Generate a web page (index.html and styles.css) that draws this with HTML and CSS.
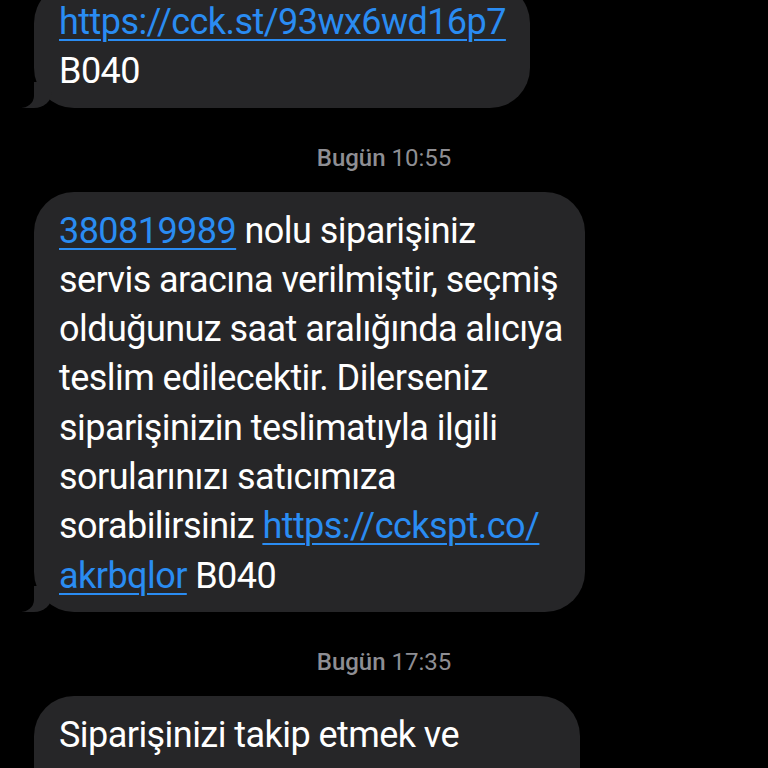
FILE: index.html
```html
<!DOCTYPE html>
<html>
	<head>
		<meta http-equiv="Content-Type" content="text/html; charset=utf-8">
		<title>Mesajlar</title>
		<link rel="stylesheet" href="styles.css">
	</head>
	<body>
		<div class="thread">

			<div class="bubble bubble-first">
				<a href="#">https://cck.st/93wx6wd16p7</a><br/>
				B040
			</div>

			<div class="stamp"><b>Bugün</b> 10:55</div>

			<div class="bubble bubble-second">
				<a href="#">380819989</a> nolu siparişiniz<br/>
				servis aracına verilmiştir, seçmiş<br/>
				olduğunuz saat aralığında alıcıya<br/>
				teslim edilecektir. Dilerseniz<br/>
				siparişinizin teslimatıyla ilgili<br/>
				sorularınızı satıcımıza<br/>
				sorabilirsiniz <a href="#">https://cckspt.co/<br/>akrbqlor</a> B040
			</div>

			<div class="stamp"><b>Bugün</b> 17:35</div>

			<div class="bubble bubble-third">
				Siparişinizi takip etmek ve
			</div>

		</div>
	</body>
</html>
```

FILE: styles.css
```css
body{
	margin: 0;
	padding: 0;
	overflow: hidden;
	height: 768px;
	background: #000;
	font-family: Roboto, "Noto Sans", sans-serif;
	color: #fff;
}

.thread{
	display: flex;
	flex-direction: column;
	margin-top: -17px;
	padding-left: 34px;
}

.bubble{
	position: relative;
	box-sizing: border-box;
	background: #262628;
	border-radius: 40px;
	padding: 15px 20px 11px 25px;
	font-size: 36px;
	line-height: 49.3px;
	letter-spacing: -0.55px;
	white-space: nowrap;
}

/* tail on the bottom left */
.bubble:before{
	content: "";
	position: absolute;
	left: -12px;
	bottom: 0;
	width: 30px;
	height: 26px;
	background: #262628;
	border-bottom-right-radius: 18px 16px;
}

.bubble:after{
	content: "";
	position: absolute;
	left: -30px;
	bottom: 0;
	width: 30px;
	height: 28px;
	background: #000;
	border-bottom-right-radius: 14px 12px;
}

.bubble-first{
	width: 496px;
}

.bubble-second{
	width: 551px;
}

.bubble-third{
	width: 546px;
	min-height: 140px;
}

.bubble a{
	color: #2a8cf2;
	text-decoration: underline;
	text-decoration-thickness: 2px;
	text-underline-offset: 5px;
}

.stamp{
	margin: 40px 0 24px -34px;
	text-align: center;
	font-size: 24px;
	line-height: 20px;
	color: #8e8e93;
}

.stamp b{
	font-weight: 500;
}
```
